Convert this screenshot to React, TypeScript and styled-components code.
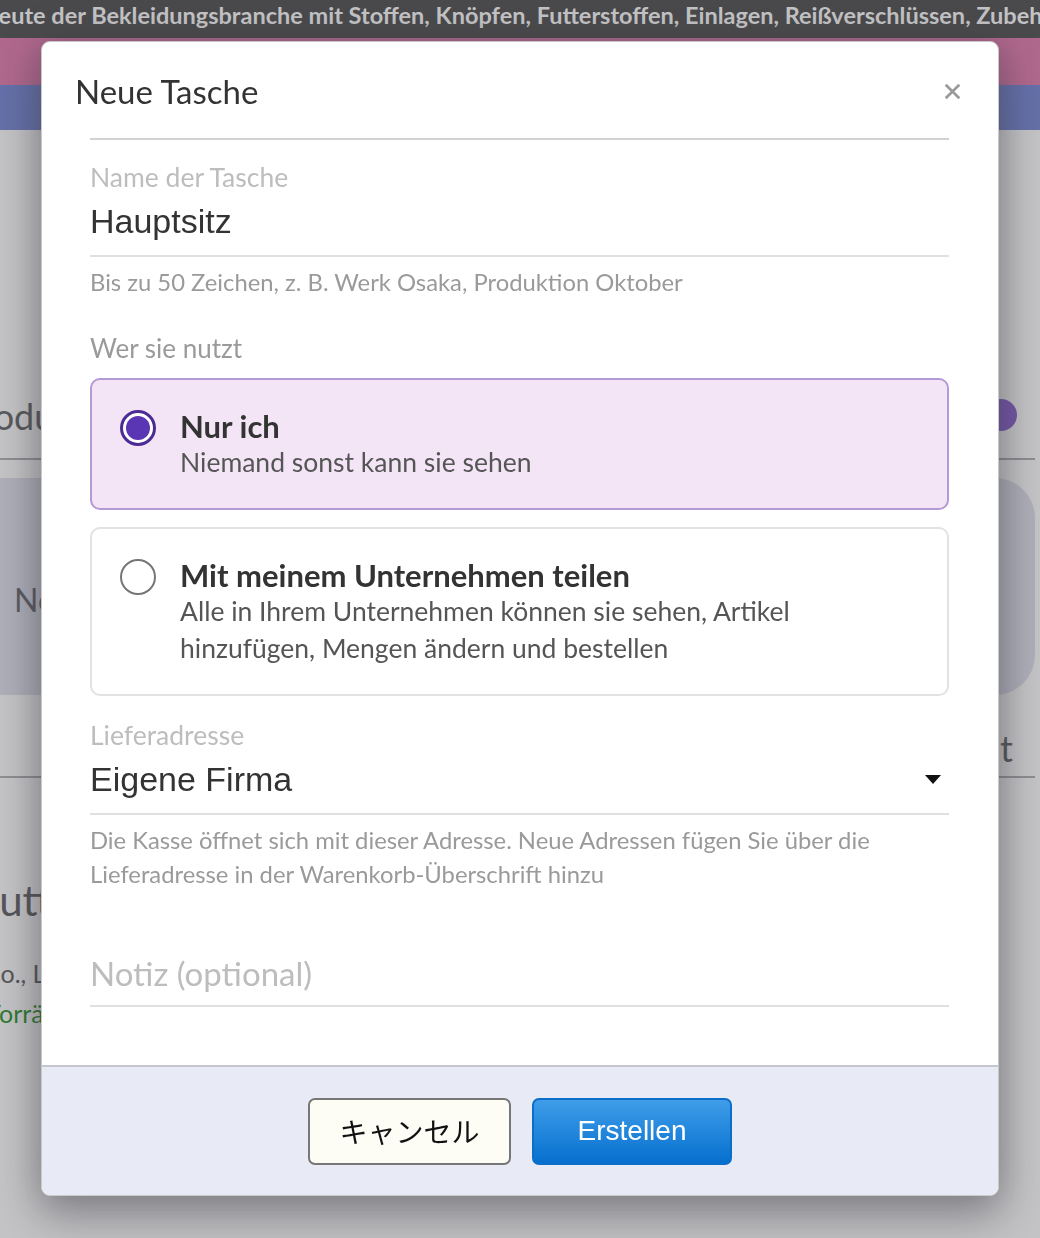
import React, { useState } from 'react';
import styled, { createGlobalStyle } from 'styled-components';

const GlobalStyle = createGlobalStyle`
  html, body {
    margin: 0;
    padding: 0;
  }
  body {
    font-family: "Lato", "Noto Sans", sans-serif;
    background: #c3c3c5;
  }
  * {
    box-sizing: border-box;
  }
`;

const body = `"Lato", "Noto Sans", sans-serif`;
const input = `"Liberation Sans", Arial, sans-serif`;

/* ---------- the page behind the dialog ---------- */

const Page = styled.div`
  width: 1040px;
  height: 1238px;
  overflow: hidden;
  background: #c3c3c5;
  display: flex;
  flex-direction: column;
`;

const Ticker = styled.div`
  height: 38px;
  flex-shrink: 0;
  background: #4a4a4c;
  color: #c4c4c6;
  font-family: ${body};
  font-weight: 700;
  font-size: 23.5px;
  white-space: nowrap;
  overflow: hidden;
  display: flex;
  align-items: center;
  padding-bottom: 9px;

  span {
    margin-left: -13px;
  }
`;

const Stripe = styled.div<{ $color: string; $height: number }>`
  height: ${p => p.$height}px;
  flex-shrink: 0;
  background: ${p => p.$color};
`;

const Backdrop = styled.div`
  flex: 1;
  display: flex;
  flex-direction: column;
  margin: 0 5px 0 -80px;
  padding-top: 260px;
`;

const BackRow = styled.div<{ $height: number; $pad: number }>`
  height: ${p => p.$height}px;
  display: flex;
  align-items: flex-end;
  justify-content: space-between;
  border-bottom: 2px solid #8d8d90;
  color: #59595c;
  font-size: 36px;
  padding: 0 22px ${p => p.$pad}px 40px;
`;

const BackDot = styled.div`
  width: 32px;
  height: 32px;
  margin: 0 -4px 7px 0;
  border-radius: 50%;
  background: #7457a6;
`;

const BackCard = styled.div`
  height: 217px;
  margin: 18px 0 0;
  background: #aeaeb9;
  border-radius: 0 40px 40px 0;
  display: flex;
  align-items: center;
  padding: 26px 0 0 94px;
  color: #5b5b62;
  font-size: 32px;
`;

const BackHeading = styled.div`
  margin-top: 97px;
  color: #56565a;
  font-size: 42px;
  padding-left: 57px;
`;

const BackLine = styled.div<{ $color?: string; $gap: number }>`
  margin-top: ${p => p.$gap}px;
  color: ${p => p.$color || '#55555a'};
  font-size: 25px;
  padding-left: 64px;
`;

/* ---------- dialog ---------- */

const Dialog = styled.div`
  position: fixed;
  left: 41px;
  top: 41px;
  width: 958px;
  height: 1155px;
  background: #fff;
  border: 1px solid #c9c9cc;
  border-radius: 9px;
  box-shadow: 0 0 38px rgba(60, 60, 70, 0.35), 0 22px 40px rgba(40, 40, 50, 0.3);
  display: flex;
  flex-direction: column;
  overflow: hidden;
`;

const Header = styled.div`
  display: flex;
  align-items: center;
  justify-content: space-between;
  padding: 2px 37px 0 33px;
  height: 96px;
`;

const Title = styled.h2`
  margin: 0;
  font-family: ${body};
  font-weight: 400;
  font-size: 33px;
  color: #333;
`;

const Close = styled.button`
  border: none;
  background: none;
  padding: 0;
  color: #9a9a9a;
  cursor: pointer;
  display: flex;
`;

const Content = styled.div`
  flex: 1;
  padding: 0 49px 0 48px;
  display: flex;
  flex-direction: column;
`;

const Divider = styled.div`
  height: 2px;
  background: #d2d2d2;
  margin-bottom: 22px;
`;

const Field = styled.label<{ $gap?: number }>`
  display: flex;
  flex-direction: column;
  margin-top: ${p => p.$gap || 0}px;
  border-bottom: 2px solid #e0e0e0;
`;

const FieldLabel = styled.span`
  font-family: ${body};
  font-size: 26.5px;
  color: #bdbdbd;
  line-height: 30px;
`;

const ValueRow = styled.div`
  display: flex;
  align-items: center;
  justify-content: space-between;
  height: 63px;
  padding: 0 8px 4px 0;
`;

const Value = styled.span`
  font-family: ${input};
  font-size: 34px;
  color: #333;
`;

const Hint = styled.p`
  margin: 8px 0 0;
  font-family: ${body};
  font-size: 23.8px;
  line-height: 34px;
  color: #9a9a9a;
`;

const GroupLabel = styled.div`
  margin-top: 33px;
  margin-bottom: 14px;
  font-family: ${body};
  font-size: 26px;
  color: #9a9a9a;
`;

const Options = styled.div`
  display: flex;
  flex-direction: column;
  gap: 17px;
`;

const Option = styled.div<{ $active: boolean }>`
  display: flex;
  align-items: flex-start;
  gap: 24px;
  padding: 28px 28px 27px 28px;
  border-radius: 10px;
  border: 2px solid ${p => (p.$active ? '#b39ad6' : '#e2e2e2')};
  background: ${p => (p.$active ? '#f3e5f6' : '#fff')};
  cursor: pointer;
`;

const Radio = styled.span<{ $active: boolean }>`
  flex-shrink: 0;
  width: 36px;
  height: 36px;
  margin-top: 2px;
  border-radius: 50%;
  border: ${p => (p.$active ? '3px solid #4c2c94' : '2px solid #767676')};
  background: #fff;
  display: flex;
  align-items: center;
  justify-content: center;

  &::after {
    content: '';
    width: 24px;
    height: 24px;
    border-radius: 50%;
    background: #5b36b4;
    display: ${p => (p.$active ? 'block' : 'none')};
  }
`;

const OptionText = styled.div`
  display: flex;
  flex-direction: column;
  max-width: 700px;
`;

const OptionTitle = styled.span`
  font-family: ${body};
  font-weight: 700;
  font-size: 31px;
  line-height: 36px;
  color: #333;
`;

const OptionDesc = styled.span`
  font-family: ${body};
  font-size: 26.5px;
  line-height: 37px;
  color: #555;
`;

const NoteField = styled.div`
  margin-top: 50px;
  height: 66px;
  display: flex;
  align-items: center;
  border-bottom: 2px solid #e0e0e0;
  font-family: ${body};
  font-size: 33px;
  color: #bdbdbd;
`;

const Footer = styled.div`
  height: 130px;
  flex-shrink: 0;
  background: #e8eaf5;
  border-top: 2px solid #c5c6cf;
  display: flex;
  align-items: center;
  justify-content: center;
  gap: 21px;
`;

const Button = styled.button<{ $primary?: boolean }>`
  width: ${p => (p.$primary ? 200 : 203)}px;
  height: 67px;
  border-radius: 7px;
  font-size: 28px;
  font-family: ${p =>
    p.$primary ? input : `"Noto Sans CJK JP", "Liberation Sans", sans-serif`};
  color: ${p => (p.$primary ? '#fff' : '#111')};
  border: 2px solid ${p => (p.$primary ? '#0b6fc9' : '#777')};
  background: ${p =>
    p.$primary ? 'linear-gradient(#3f9de9, #0670cf)' : '#fdfdf6'};
  cursor: pointer;
`;

const Caret = () => (
  <svg width="16" height="9" viewBox="0 0 16 9">
    <path d="M0 0h16L8 9z" fill="#111" />
  </svg>
);

const CloseIcon = () => (
  <svg width="17" height="17" viewBox="0 0 20 20">
    <path d="M2 2l16 16M18 2L2 18" stroke="currentColor" strokeWidth="3.2" />
  </svg>
);

const App: React.FC = () => {
  const [shared, setShared] = useState(false);

  return (
    <>
      <GlobalStyle />
      <Page>
        <Ticker>
          <span>
            Leute der Bekleidungsbranche mit Stoffen, Knöpfen, Futterstoffen, Einlagen,
            Reißverschlüssen, Zubehör und mehr
          </span>
        </Ticker>
        <Stripe $color="#b0688d" $height={47} />
        <Stripe $color="#6670a8" $height={45} />
        <Backdrop>
          <BackRow $height={70} $pad={20}>
            <span>Produkt</span>
            <BackDot />
          </BackRow>
          <BackCard>Notiz</BackCard>
          <BackRow $height={83} $pad={6}>
            <span />
            <span>Gesamt</span>
          </BackRow>
          <BackHeading>Futter</BackHeading>
          <BackLine $gap={33}>Co., Ltd.</BackLine>
          <BackLine $gap={10} $color="#2f7a33">
            Vorrätig
          </BackLine>
        </Backdrop>
      </Page>

      <Dialog role="dialog" aria-label="Neue Tasche">
        <Header>
          <Title>Neue Tasche</Title>
          <Close aria-label="Schließen">
            <CloseIcon />
          </Close>
        </Header>
        <Content>
          <Divider />
          <Field>
            <FieldLabel>Name der Tasche</FieldLabel>
            <ValueRow>
              <Value>Hauptsitz</Value>
            </ValueRow>
          </Field>
          <Hint>Bis zu 50 Zeichen, z. B. Werk Osaka, Produktion Oktober</Hint>

          <GroupLabel>Wer sie nutzt</GroupLabel>
          <Options>
            <Option $active={!shared} onClick={() => setShared(false)}>
              <Radio $active={!shared} />
              <OptionText>
                <OptionTitle>Nur ich</OptionTitle>
                <OptionDesc>Niemand sonst kann sie sehen</OptionDesc>
              </OptionText>
            </Option>
            <Option $active={shared} onClick={() => setShared(true)}>
              <Radio $active={shared} />
              <OptionText>
                <OptionTitle>Mit meinem Unternehmen teilen</OptionTitle>
                <OptionDesc>
                  Alle in Ihrem Unternehmen können sie sehen, Artikel hinzufügen, Mengen
                  ändern und bestellen
                </OptionDesc>
              </OptionText>
            </Option>
          </Options>

          <Field $gap={24}>
            <FieldLabel>Lieferadresse</FieldLabel>
            <ValueRow>
              <Value>Eigene Firma</Value>
              <Caret />
            </ValueRow>
          </Field>
          <Hint>
            Die Kasse öffnet sich mit dieser Adresse. Neue Adressen fügen Sie über die
            Lieferadresse in der Warenkorb-Überschrift hinzu
          </Hint>

          <NoteField>Notiz (optional)</NoteField>
        </Content>
        <Footer>
          <Button>キャンセル</Button>
          <Button $primary>Erstellen</Button>
        </Footer>
      </Dialog>
    </>
  );
};

export default App;
